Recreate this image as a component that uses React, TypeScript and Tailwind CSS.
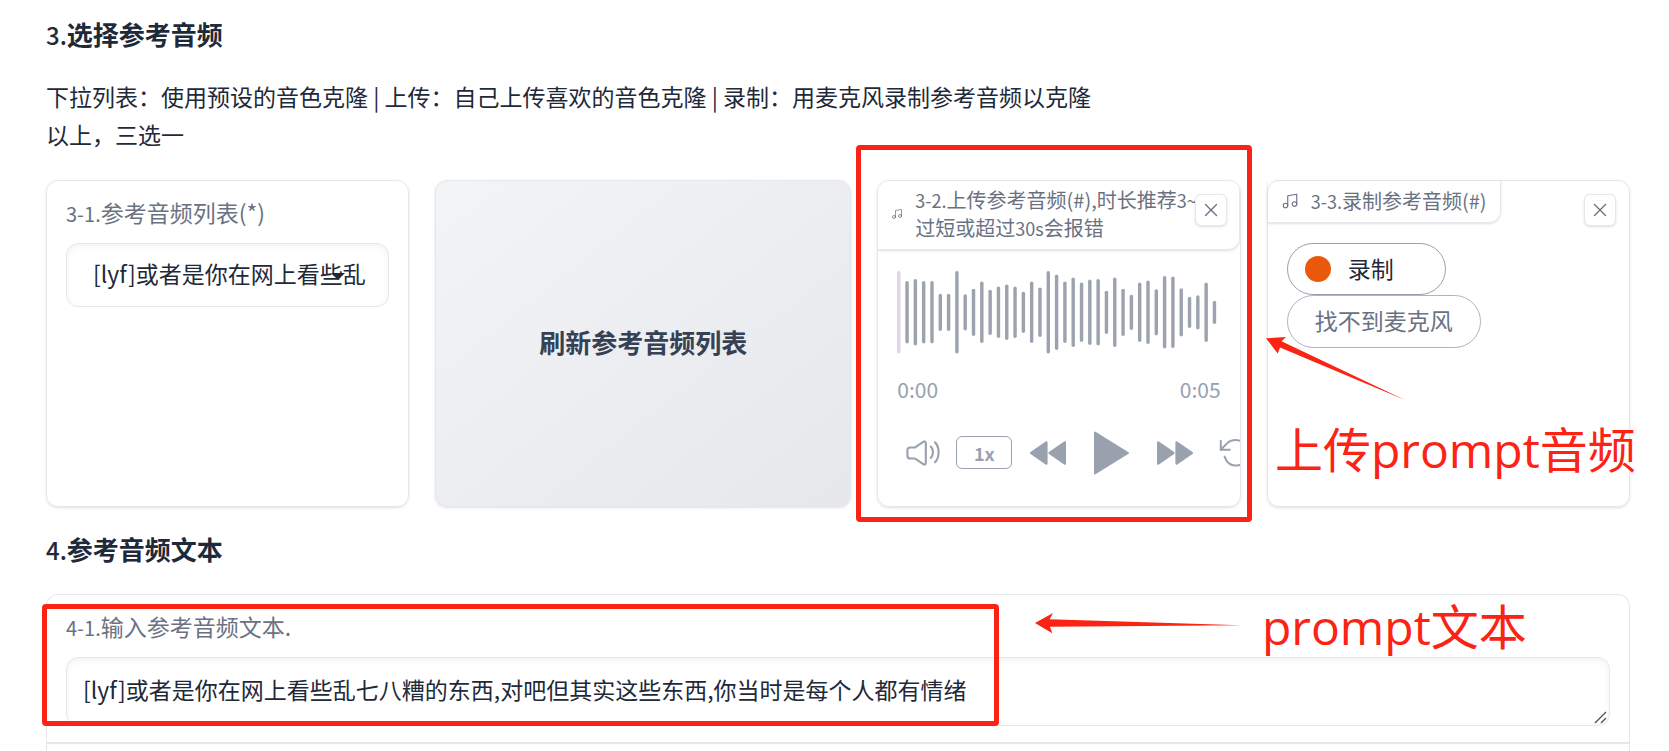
import React from "react"
import { Music, X } from "lucide-react"

const BAR_HEIGHTS = [
  82, 62, 66, 62, 62, 37, 37, 82, 36, 47, 61, 45, 51, 55, 51, 41, 61, 49, 82, 75,
  61, 69, 59, 65, 66, 43, 69, 47, 35, 59, 63, 46, 72, 71, 48, 31, 34, 59, 23,
]

const TRANSCRIPT = "[lyf]或者是你在网上看些乱七八糟的东西,对吧但其实这些东西,你当时是每个人都有情绪"

function Waveform() {
  return (
    <svg viewBox="0 0 321 84" className="block w-full" aria-hidden="true">
      {BAR_HEIGHTS.map((h, i) => (
        <rect
          key={i}
          x={i * 8.25}
          y={42 - h / 2}
          width={3.4}
          height={h}
          rx={1.7}
          fill={i === 0 ? "#ddd6e8" : "#9ca3af"}
        />
      ))}
    </svg>
  )
}

function VolumeIcon() {
  return (
    <svg viewBox="0 0 24 24" className="h-[34px] w-[34px]" fill="none" stroke="currentColor" strokeWidth="1.5" strokeLinecap="round">
      <path d="M1 13.857V10.143C1 9.038 1.895 8.143 3 8.143H5.9C6.096 8.143 6.287 8.085 6.45 7.978L12.45 4.022C13.114 3.584 14 4.061 14 4.857V19.143C14 19.939 13.114 20.416 12.45 19.978L6.45 16.022C6.287 15.915 6.096 15.857 5.9 15.857H3C1.895 15.857 1 14.962 1 13.857Z" />
      <path d="M17.5 7.5C17.5 7.5 19 9 19 11.5C19 14 17.5 15.5 17.5 15.5" />
      <path d="M20.5 4.5C20.5 4.5 23 7 23 11.5C23 16 20.5 18.5 20.5 18.5" />
    </svg>
  )
}

function SkipIcon({ className = "" }: { className?: string }) {
  return (
    <svg viewBox="0 0 36 24" className={`h-6 w-9 ${className}`} fill="currentColor" stroke="currentColor" strokeWidth="2.4" strokeLinejoin="round">
      <path d="M1.2 1.4V22.6L16.4 12Z" />
      <path d="M19.6 1.4V22.6L34.8 12Z" />
    </svg>
  )
}

function PlayIcon() {
  return (
    <svg viewBox="0 0 35 44" className="h-11 w-[35px]" fill="currentColor" stroke="currentColor" strokeWidth="2" strokeLinejoin="round">
      <path d="M1 1.5V42.5L34 22Z" />
    </svg>
  )
}

function UndoIcon() {
  return (
    <svg viewBox="0 0 30 30" className="h-[30px] w-[30px]" fill="none" stroke="currentColor" strokeWidth="2" strokeLinecap="round" strokeLinejoin="round">
      <path d="M1.8 2.8V11.8H10.8" />
      <path d="M1.8 11.8L8 5.4C10.4 3 13.4 2 16.5 2C23.5 2 29 7.6 29 14.8C29 22 23.5 27.6 16.5 27.6C11.5 27.6 7.4 24 5.6 18.6" />
    </svg>
  )
}

function CloseButton({ label }: { label: string }) {
  return (
    <button
      type="button"
      aria-label={label}
      className="absolute top-[13px] right-[13px] flex h-8 w-8 items-center justify-center rounded-md border border-gray-200 bg-white text-gray-500 shadow-sm"
    >
      <X className="h-[22px] w-[22px]" strokeWidth={1.5} />
    </button>
  )
}

export default function App() {
  return (
    <main className="relative overflow-hidden bg-white pr-[39px] pl-[46px] font-['Noto_Sans_CJK_SC',sans-serif] text-[23px] text-gray-800">
      <h3 className="pt-[15px] text-[26px] leading-[38px] font-bold">
        <span className="text-2xl font-medium">3.</span>选择参考音频
      </h3>
      <p className="mt-6 leading-[38px]">
        下拉列表：使用预设的音色克隆 | 上传：自己上传喜欢的音色克隆 | 录制：用麦克风录制参考音频以克隆
        <br />
        以上，三选一
      </p>

      <div className="mt-[27px] grid h-[327px] grid-cols-[1fr_416px_1fr_1fr] gap-[26px]">
        {/* Preset list */}
        <section className="min-w-0 rounded-xl border border-gray-200 px-[19px] pt-3.5 shadow-sm">
          <label htmlFor="preset" className="block leading-[34px] text-gray-500">
            <span className="text-xl">3-1.</span>参考音频列表(*)
          </label>
          <div className="relative mt-3.5">
            <select
              id="preset"
              className="h-16 w-full appearance-none overflow-hidden rounded-xl border border-gray-200 bg-white pr-5 pb-1 pl-[26px] text-clip shadow-[inset_0_2px_6px_0_rgb(0_0_0/0.06)]"
            >
              <option>[lyf]或者是你在网上看些乱</option>
            </select>
            <svg viewBox="0 0 14 7" className="pointer-events-none absolute top-[30px] right-11 h-[7px] w-3.5 fill-gray-800">
              <path d="M0 0H14L7 7Z" />
            </svg>
          </div>
        </section>

        <button
          type="button"
          className="min-w-0 rounded-xl border border-gray-200 bg-linear-to-br from-gray-100 to-gray-200 pb-1 text-[26px] font-bold text-gray-700 shadow-sm"
        >
          刷新参考音频列表
        </button>

        {/* Upload */}
        <section className="relative min-w-0 overflow-hidden rounded-xl border border-gray-200 shadow-sm">
          <div className="flex h-[69px] items-center overflow-hidden rounded-br-xl border-r border-b border-gray-200 pb-0.5 pl-[13px] text-xl leading-7 text-gray-500 shadow-sm">
            <Music className="mr-3 h-3 w-3 shrink-0" strokeWidth={1.5} />
            <span className="whitespace-nowrap">
              <span className="text-lg">3-2.</span>上传参考音频(#),时长推荐<span className="text-lg">3~10s</span>
              <br />
              过短或超过<span className="text-lg">30s</span>会报错
            </span>
          </div>
          <CloseButton label="清除上传" />
          <div className="px-[19px] pt-5 text-gray-400">
            <Waveform />
            <div className="mt-[18px] flex justify-between text-[21px] leading-8">
              <time>0:00</time>
              <time>0:05</time>
            </div>
            <div className="mt-[26px] flex h-11 w-max items-center pl-[9px]">
              <button type="button" aria-label="音量"><VolumeIcon /></button>
              <button type="button" className="ml-4 h-[33px] w-14 rounded-md border border-gray-400 text-lg leading-none font-bold">1x</button>
              <button type="button" aria-label="后退" className="ml-[18px]"><SkipIcon className="rotate-180" /></button>
              <button type="button" aria-label="播放" className="ml-7"><PlayIcon /></button>
              <button type="button" aria-label="快进" className="ml-7"><SkipIcon /></button>
              <button type="button" aria-label="重置" className="ml-[26px]"><UndoIcon /></button>
            </div>
          </div>
        </section>

        {/* Record */}
        <section className="relative min-w-0 rounded-xl border border-gray-200 shadow-sm">
          <div className="flex h-[42px] w-max items-center gap-3 rounded-br-xl border-r border-b border-gray-200 px-[13px] pb-0.5 text-xl text-gray-500 shadow-sm">
            <Music className="h-[18px] w-[18px]" strokeWidth={1.5} />
            <span>
              <span className="text-lg">3-3.</span>录制参考音频(#)
            </span>
          </div>
          <CloseButton label="清除录音" />
          <div className="mt-5 flex flex-col items-start px-[19px]">
            <button type="button" className="flex h-[52px] w-[159px] items-center gap-[17px] rounded-full border border-gray-400 pl-[17px]">
              <span className="h-[26px] w-[26px] rounded-full bg-[#ea580c]" />
              <span className="pb-0.5">录制</span>
            </button>
            <button type="button" className="h-[53px] rounded-full border border-gray-400/80 px-[27px] pb-0.5 text-gray-500">
              找不到麦克风
            </button>
          </div>
        </section>
      </div>

      <h3 className="mt-[23px] text-[26px] leading-[38px] font-bold">
        <span className="text-2xl font-medium">4.</span>参考音频文本
      </h3>
      <section className="mt-[26px] h-40 rounded-t-xl border border-b-0 border-gray-200">
        <div className="relative h-[149px] border-b-2 border-gray-200 px-[19px] pt-3.5">
          <label htmlFor="transcript" className="block leading-[34px] text-gray-500">
            <span className="text-xl">4-1.</span>输入参考音频文本.
          </label>
          <textarea
            id="transcript"
            rows={1}
            defaultValue={TRANSCRIPT}
            className="mt-3.5 block h-[69px] w-full resize-none overflow-hidden rounded-xl border border-gray-200 px-4 py-3 leading-[38px] shadow-[inset_0_2px_6px_0_rgb(0_0_0/0.06)]"
          />
          <svg viewBox="0 0 13 13" className="pointer-events-none absolute right-[22px] bottom-[18px] h-[13px] w-[13px] fill-none stroke-gray-600" strokeWidth="1.4">
            <path d="M1 12L12 1M7 12L12 7" />
          </svg>
        </div>
      </section>

      {/* Hand-drawn annotations over the page */}
      <div className="pointer-events-none absolute top-[145px] left-[856px] h-[377px] w-[396px] rounded-sm border-5 border-[#fa2314]" />
      <div className="pointer-events-none absolute top-[604px] left-[42px] h-[122px] w-[957px] rounded-sm border-5 border-[#fa2314]" />
      <svg viewBox="0 0 140 64" className="pointer-events-none absolute top-[337px] left-[1266px] h-16 w-[140px] fill-[#fa2314]">
        <path d="M0 1.3L20 0L15.5 4.2L139 63L14 10.5L11.7 16.5Z" />
      </svg>
      <svg viewBox="0 0 206 21" className="pointer-events-none absolute top-[613px] left-[1035px] h-[21px] w-[206px] fill-[#fa2314]">
        <path d="M0 10L18 0L14.7 6.3L206 12.3L15 13.7L17.3 20.3Z" />
      </svg>
      <span className="pointer-events-none absolute top-[418px] left-[1275px] font-['Open_Sans','Noto_Sans_CJK_SC',sans-serif] text-5xl leading-[64px] whitespace-nowrap text-[#fa2314]">
        上传prompt音频
      </span>
      <span className="pointer-events-none absolute top-[595px] left-[1262px] font-['Open_Sans','Noto_Sans_CJK_SC',sans-serif] text-5xl leading-[64px] whitespace-nowrap text-[#fa2314]">
        prompt文本
      </span>
    </main>
  )
}
